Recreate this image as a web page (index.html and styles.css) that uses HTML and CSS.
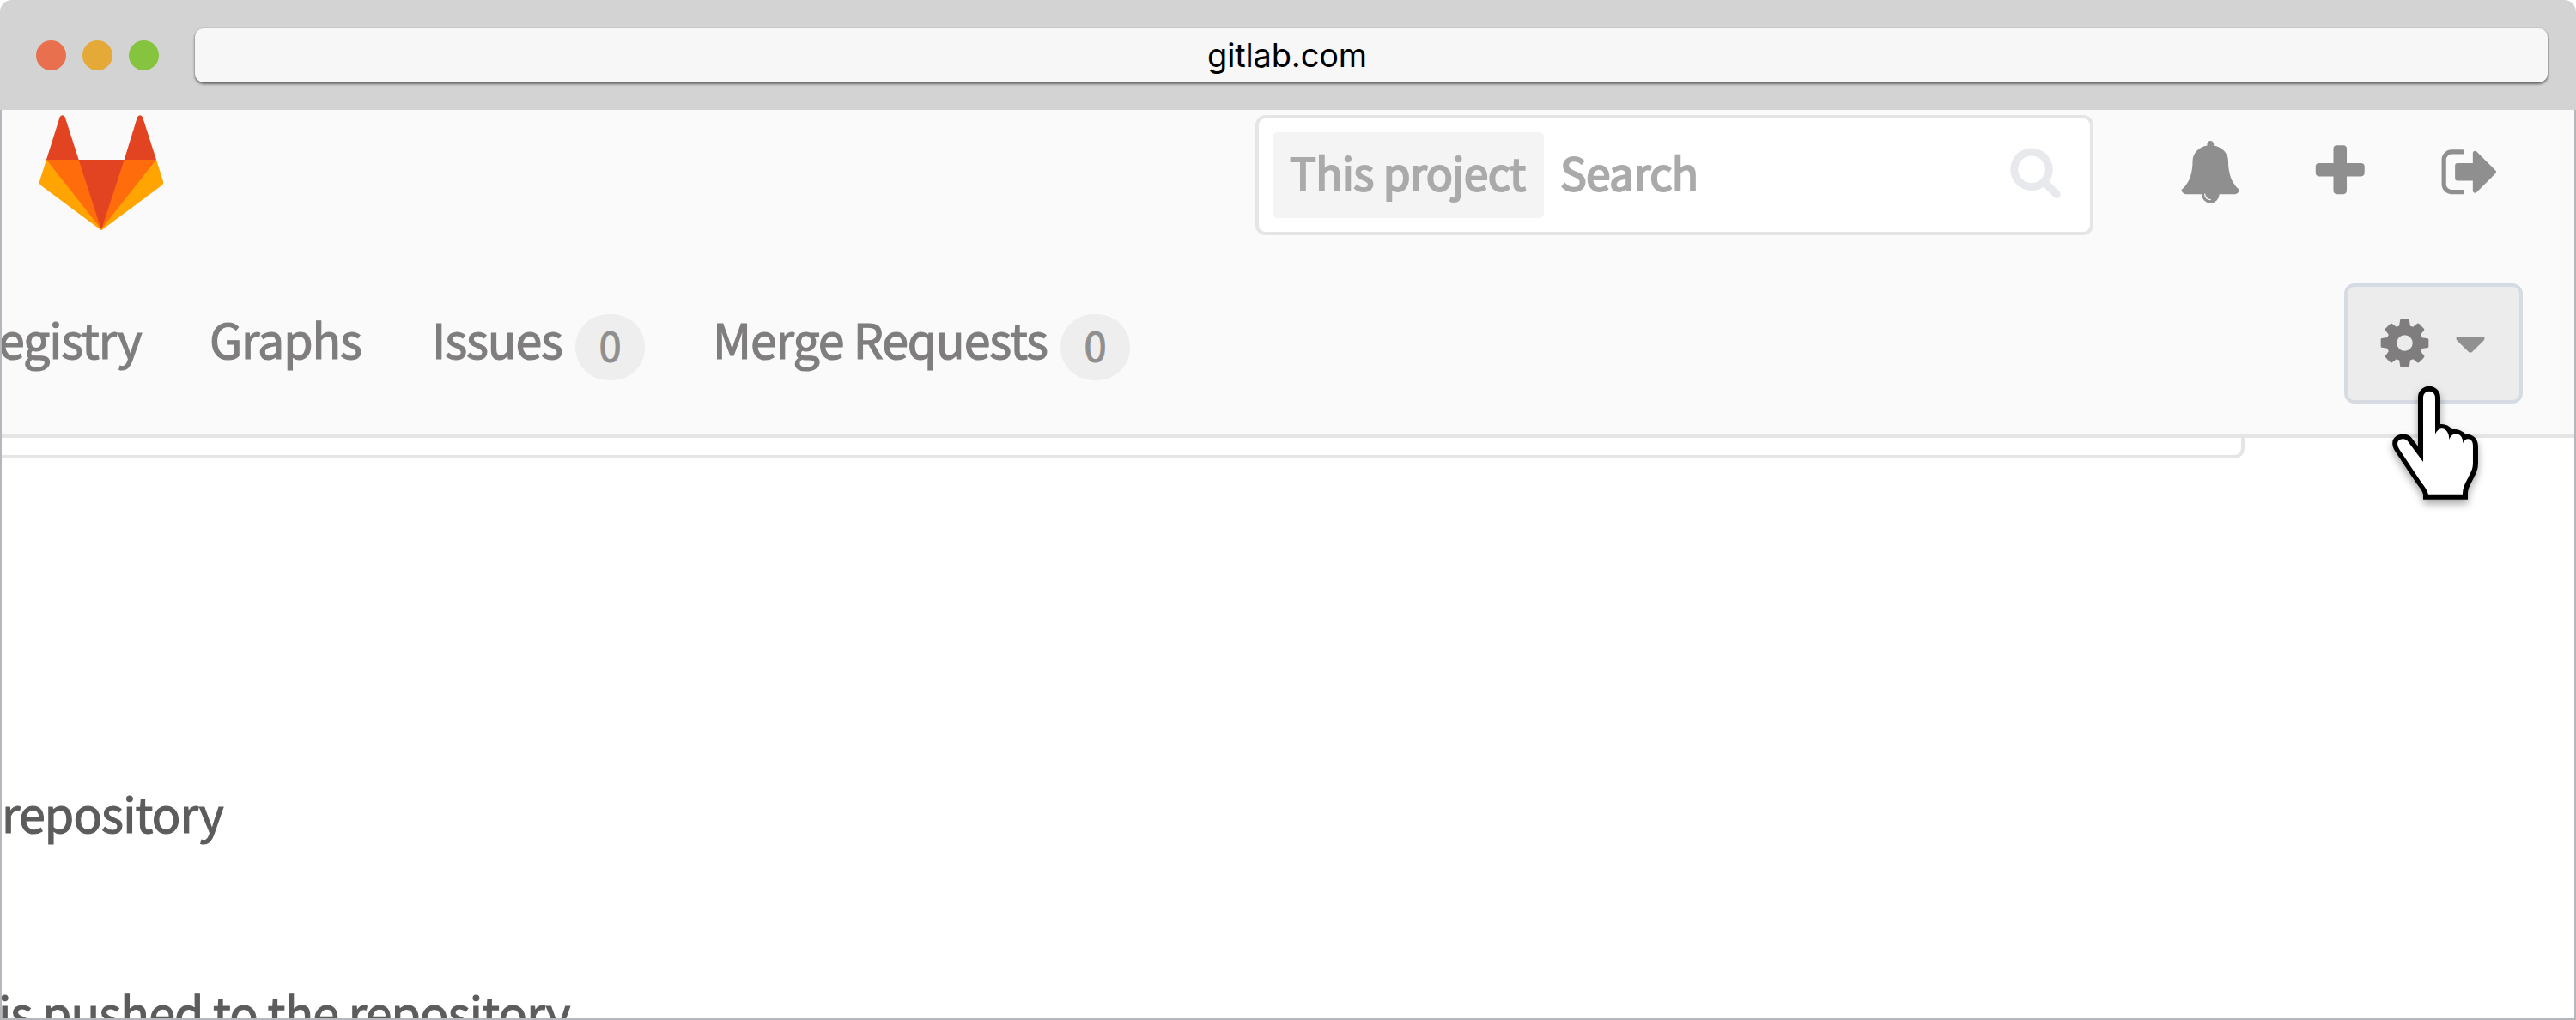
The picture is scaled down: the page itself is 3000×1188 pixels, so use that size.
FILE: index.html
```html
<!DOCTYPE html>
<html lang="en">
<head>
<meta charset="utf-8">
<title>gitlab.com</title>
<link rel="stylesheet" href="styles.css">
</head>
<body>
<div class="browser">
  <div class="chrome">
    <span class="dot red"></span><span class="dot yellow"></span><span class="dot green"></span>
    <div class="address"><span class="url">gitlab.com</span></div>
  </div>
  <div class="page">
    <header class="header">
      <div class="top-row">
        <svg class="logo" viewBox="138 402 432 402" aria-label="GitLab">
          <path fill="#e24320" d="M162 558 209 409Q218 397 227 409L275 558H434L480 409Q489 397 498 409L546 558 358 801Q354 805 350 801Z"/>
          <path fill="#ff6c0c" d="M162 558H275L354 803ZM546 558H434L354 803Z"/>
          <path fill="#ffa400" d="M162 558 138 634Q136 642 142 647L350 802 356 803ZM546 558 570 634Q572 642 566 647L358 802 352 803Z"/>
        </svg>
        <div class="search">
          <span class="scope">This project</span>
          <span class="placeholder">Search</span>
          <svg class="search-icon" viewBox="0 0 1792 1792"><path d="M1216 832q0-185-131.5-316.5t-316.5-131.5-316.5 131.5-131.5 316.5 131.5 316.5 316.5 131.5 316.5-131.5 131.5-316.5zm512 832q0 52-38 90t-90 38q-54 0-90-38l-343-342q-179 124-399 124-143 0-273.5-55.5t-225-150-150-225-55.5-273.5 55.5-273.5 150-225 225-150 273.5-55.5 273.5 55.5 225 150 150 225 55.5 273.5q0 220-124 399l343 343q37 37 37 90z"/></svg>
        </div>
        <div class="actions">
          <svg viewBox="0 0 1792 1792"><path d="M912 1696q0-16-16-16-59 0-101.5-42.5t-42.5-101.5q0-16-16-16t-16 16q0 73 51.5 124.5t124.5 51.5q16 0 16-16zm816-288q0 52-38 90t-90 38h-448q0 106-75 181t-181 75-181-75-75-181h-448q-52 0-90-38t-38-90q50-42 91-88t85-119.500 74.500-158.500 50-206 19.500-260q0-152 117-282.500t307-158.500q-8-19-8-39 0-40 28-68t68-28 68 28 28 68q0 20-8 39 190 28 307 158.500t117 282.500q0 139 19.500 260t50 206 74.500 158.500 85 119.500 91 88z"/></svg>
          <svg viewBox="0 0 1792 1792"><path d="M1600 736v192q0 40-28 68t-68 28h-416v416q0 40-28 68t-68 28h-192q-40 0-68-28t-28-68v-416h-416q-40 0-68-28t-28-68v-192q0-40 28-68t68-28h416v-416q0-40 28-68t68-28h192q40 0 68 28t28 68v416h416q40 0 68 28t28 68z"/></svg>
          <svg viewBox="0 0 1792 1792"><path d="M704 1440q0 4 1 20t.5 26.500-3 23.500-10 19.500-20.500 6.500h-320q-119 0-203.500-84.500t-84.500-203.500v-704q0-119 84.500-203.500t203.500-84.500h320q13 0 22.500 9.500t9.500 22.500q0 4 1 20t.5 26.500-3 23.500-10 19.500-20.500 6.500h-320q-66 0-113 47t-47 113v704q0 66 47 113t113 47h312l11.500 1 11.500 3 8 5.500 7 9 2 13.500zm928-544q0 26-19 45l-544 544q-19 19-45 19t-45-19-19-45v-288h-448q-26 0-45-19t-19-45v-384q0-26 19-45t45-19h448v-288q0-26 19-45t45-19 45 19l544 544q19 19 19 45z"/></svg>
        </div>
      </div>
      <nav class="nav">
        <div class="tab registry">egistry</div>
        <div class="tab graphs">Graphs</div>
        <div class="tab issues"><span>Issues</span><span class="badge">0</span></div>
        <div class="tab merge"><span>Merge Requests</span><span class="badge">0</span></div>
        <button class="settings">
          <svg class="gear" viewBox="0 0 1792 1792"><path d="M1152 896q0-106-75-181t-181-75-181 75-75 181 75 181 181 75 181-75 75-181zm512-109v222q0 12-8 23t-20 13l-185 28q-19 54-39 91 35 50 107 138 10 12 10 25t-9 23q-27 37-99 108t-94 71q-12 0-26-9l-138-108q-44 23-91 38-16 136-29 186-7 28-36 28h-222q-14 0-24.500-8.500t-11.500-21.500l-28-184q-49-16-90-37l-141 107q-10 9-25 9-14 0-25-11-126-114-165-168-7-10-7-23 0-12 8-23 15-21 51-66.500t54-70.500q-27-50-41-99l-183-27q-13-2-21-12.500t-8-23.500v-222q0-12 8-23t19-13l186-28q14-46 39-92-40-57-107-138-10-12-10-24 0-10 9-23 26-36 98.500-107.500t94.500-71.500q13 0 26 10l138 107q44-23 91-38 16-136 29-186 7-28 36-28h222q14 0 24.500 8.500t11.500 21.500l28 184q49 16 90 37l142-107q9-9 24-9 13 0 25 10 129 119 165 170 7 8 7 22 0 12-8 23-15 21-51 66.500t-54 70.500q26 50 41 98l183 28q13 2 21 12.500t8 23.500z"/></svg>
          <svg class="caret" viewBox="0 0 34 20"><path d="M2 0H32Q34 0 34 2 34 3.500 33 4.500L19 18.500Q17 20 15 18.500L1 4.500Q0 3.500 0 2 0 0 2 0Z"/></svg>
        </button>
      </nav>
    </header>
    <main class="content">
      <div class="panel-end"></div>
      <p class="line first">repository</p>
      <p class="line second">is pushed to the repository</p>
    </main>
  </div>
  <svg class="cursor" viewBox="360 400 340 450">
    <path d="M486 816V798C484 790 478 780 470 770 450 742 425 703 387 646 373 622 377 603 395 593 415 583 435 588 446 601L468 631V459A39 39 0 0 1 546 459V553C562 551 577 558 587 571 607 569 622 575 635 588 660 587 678 603 678 630V690C678 708 673 722 664 738L648 770C643 781 642 790 642 798V816Z"/>
    <path fill="#fff" d="M504 798C501 785 490 770 480 757L404 643C394 627 393 613 405 607 417 602 428 606 434 615L486 685V459A21 21 0 0 1 528 459V590C532 577 540 569 553 569 566 570 577 582 577 608 581 594 590 587 602 587 615 589 625 598 625 620 629 609 635 605 643 605 655 606 660 615 660 630V690C660 705 655 717 648 730L632 762C626 775 624 787 624 798Z"/>
  </svg>
</div>
</body>
</html>
```
FILE: styles.css
```css
* { box-sizing: border-box; }
body { margin: 0; background: #fff; font-family: "Noto Sans CJK SC", sans-serif; }
.browser { position: relative; width: 3000px; height: 1188px; display: flex; flex-direction: column; overflow: hidden; }

.chrome { height: 128px; flex: none; background: #d3d3d3; border-radius: 14px 14px 0 0; display: flex; align-items: center; padding: 0 33px 0 42px; }
.dot { width: 35px; height: 35px; border-radius: 50%; margin-right: 19px; }
.red { background: #e8704e; }
.yellow { background: #e5a937; }
.green { background: #86c33e; margin-right: 42px; }
.address { flex: 1; height: 63px; padding-right: 196px; border-radius: 10px; background: #f7f7f7; box-shadow: 0 2px 3px rgba(0,0,0,.5), 0 0 2px rgba(0,0,0,.15); text-align: center; }
.url { font: 38px/63px Inter, sans-serif; color: #000; letter-spacing: -.15px; }

.page { flex: 1; min-height: 0; border: 2px solid #b4b8bd; border-top: 0; overflow: hidden; display: flex; flex-direction: column; }
.header { height: 382px; flex: none; background: #fafafa; border-bottom: 4px solid #e5e5e5; }
.top-row { height: 202px; display: flex; align-items: flex-start; padding: 6px 85px 0 44px; }
.logo { width: 144px; height: 134px; }
.search { width: 976px; height: 140px; margin-left: 1272px; border: 4px solid #e5e5e5; border-radius: 12px; background: #fff; display: flex; align-items: center; padding: 0 32px 0 16px; color: #aaa; font-size: 51.500px; letter-spacing: -.65px; -webkit-text-stroke: 2px #aaa; }
.scope { width: 316px; height: 100px; line-height: 92px; border-radius: 6px; background: #f4f4f4; padding-left: 20px; white-space: nowrap; }
.placeholder { margin-left: 19px; line-height: 100px; margin-top: -8px; }
.search-icon { width: 63px; height: 63px; margin: -9px 0 0 auto; fill: #e7e9ed; }
.actions { margin: 30px 0 0 auto; display: flex; gap: 79px; fill: #8f8f8f; }
.actions svg { width: 72.500px; height: 72.500px; }

.nav { display: flex; height: 140px; padding: 0 60px 0 0; font-size: 55.500px; line-height: 80px; letter-spacing: -1.120px; color: #7f7d7d; -webkit-text-stroke: 1.200px #7f7d7d; white-space: nowrap; }
.tab { display: flex; align-items: flex-start; padding-top: 24px; }
.registry { width: 246px; margin-left: -4px; }
.graphs { width: 259px; }
.issues { width: 327px; }
.badge { font-size: 47px; letter-spacing: 0; line-height: 70px; height: 77px; margin: 12px 0 0 15px; padding: 0 27.500px; border-radius: 38px; background: #eee; color: #8f8f8f; -webkit-text-stroke: 1px #8f8f8f; }
.settings { margin-left: auto; width: 208px; height: 140px; padding: 0 40px 0 34px; border: 4px solid #d6dae3; border-radius: 12px; background: #ececec; display: flex; align-items: center; justify-content: space-between; }
.gear { width: 65px; height: 65px; fill: #807d7e; margin-top: -2px; }
.caret { width: 34px; height: 19.500px; fill: #919191; margin-top: 3px; }

.content { flex: 1; min-height: 0; color: #5c5c5c; overflow: hidden; }
.panel-end { width: 2612px; height: 24px; border: solid #e5e5e5; border-width: 0 4px 4px 0; border-radius: 0 0 12px 0; }
.line { margin: 0; font-size: 55.500px; line-height: 80px; letter-spacing: -.9px; white-space: nowrap; -webkit-text-stroke: 1.200px #5c5c5c; }
.first { padding: 372px 0 0 0; }
.second { padding: 152px 0 0 0; margin-left: -4px; }

.cursor { position: absolute; left: 2780px; top: 443.300px; width: 113.300px; height: 150px; filter: drop-shadow(0 5px 5px rgba(0,0,0,.35)); }
```
